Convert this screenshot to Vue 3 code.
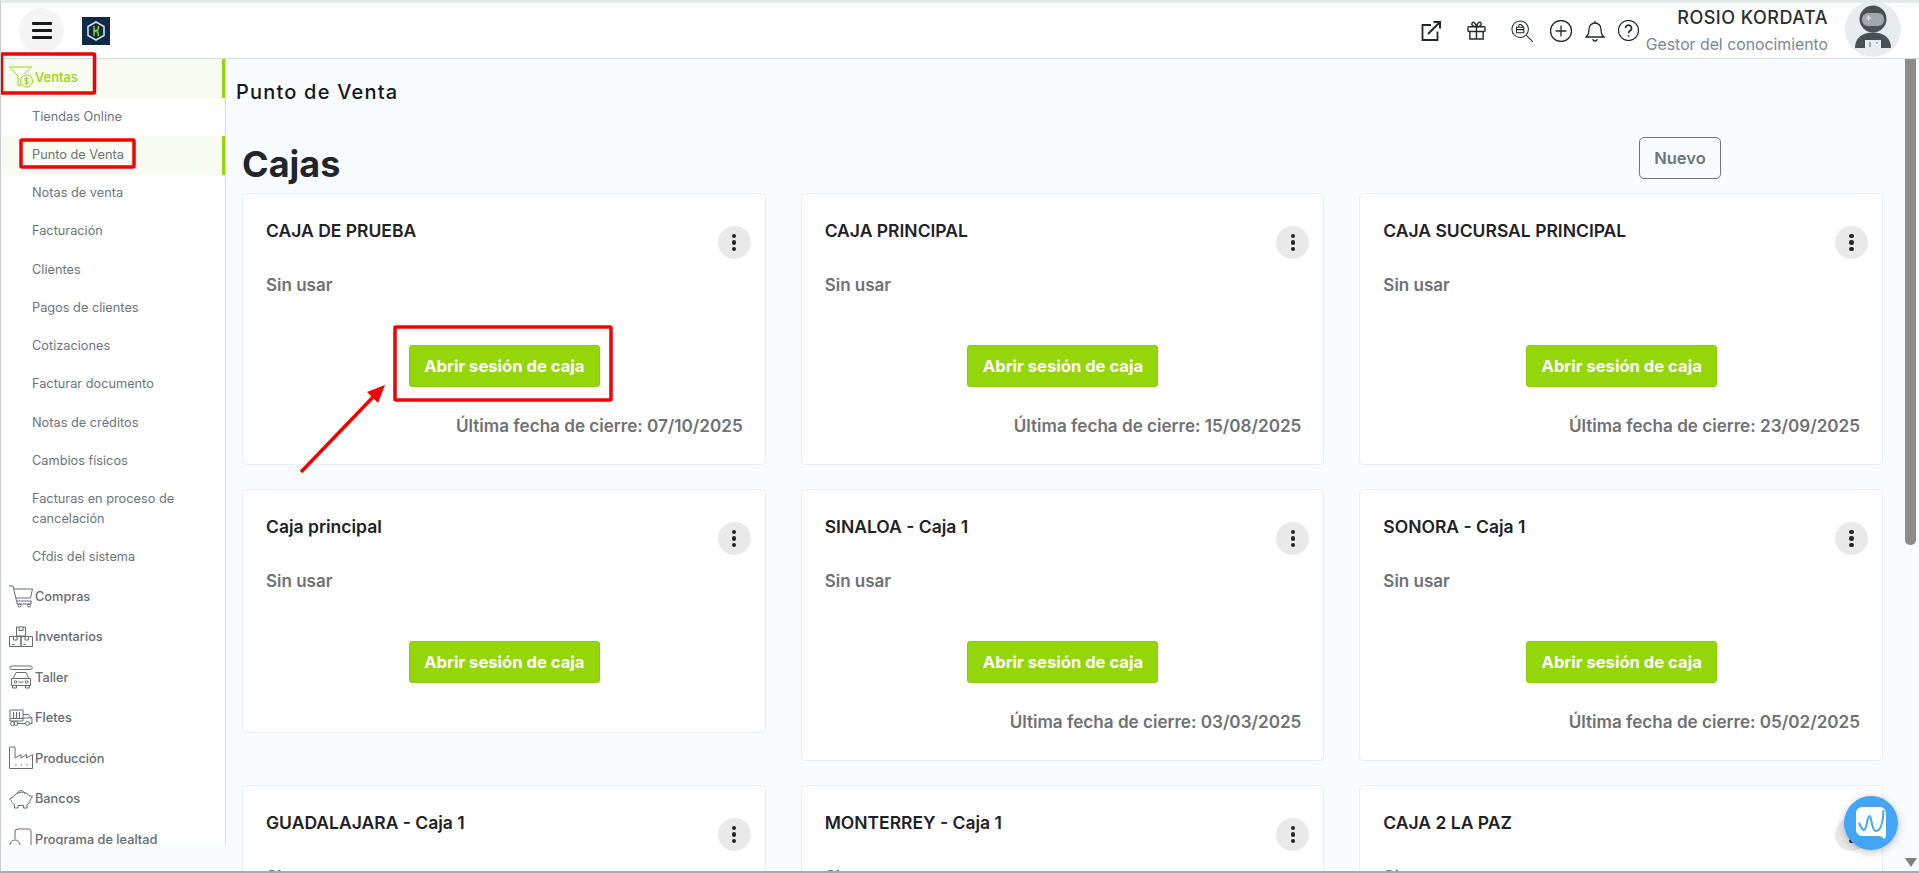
<script setup>
const subItems = [
  { label: 'Tiendas Online' },
  { label: 'Punto de Venta', active: true },
  { label: 'Notas de venta' },
  { label: 'Facturación' },
  { label: 'Clientes' },
  { label: 'Pagos de clientes' },
  { label: 'Cotizaciones' },
  { label: 'Facturar documento' },
  { label: 'Notas de créditos' },
  { label: 'Cambios físicos' },
  { label: 'Facturas en proceso de cancelación' },
  { label: 'Cfdis del sistema' }
]

const modules = [
  {
    label: 'Compras',
    paths: ['M0 2h4l3.500 15h15', 'M5 5h18.500l-2 9', 'M7 14h14.500', 'M8 17v3h14v-3'],
    circles: [[10.500, 21.500, 1.500], [20, 21.500, 1.500]]
  },
  {
    label: 'Inventarios',
    paths: ['M7.500 2h9v9h-9z', 'M0.500 11.500h11.500v10H0.500z', 'M12 11.500h11.500v10H12z', 'M10 2v3.500h4V2', 'M4.500 11.500v3.500h3.500v-3.500', 'M16 11.500v3.500h3.500v-3.500', 'M3 19.500h2.500', 'M14.500 19.500h2.500'],
    circles: []
  },
  {
    label: 'Taller',
    paths: ['M2.500 1h19', 'M2.500 4.500h19', 'M2.500 1a1.750 1.750 0 0 0 0 3.500', 'M21.500 1a1.750 1.750 0 0 1 0 3.500', 'M4.500 13l2.500-5.500h10l2.500 5.500', 'M2.500 13.500h19v7h-19z', 'M3.500 20.500v2.500h4v-2.500', 'M16.500 20.500v2.500h4v-2.500', 'M9.500 17h5'],
    circles: [[6.500, 17, 1.300], [17.500, 17, 1.300]]
  },
  {
    label: 'Fletes',
    paths: ['M1 4h13v11H1z', 'M4.500 6v6', 'M7.500 6v6', 'M10.500 6v6', 'M1 12.500h13', 'M14 8.500h5l4 3.500v5.500h-2', 'M14 12h9', 'M8.500 17.500h8'],
    circles: [[3.500, 17.500, 2], [7, 17.500, 2], [18.500, 17.500, 2]]
  },
  {
    label: 'Producción',
    paths: ['M0.500 1h5.500v11l6-3.500v3.500l5.500-3.500v3.500l6-3.500v14H0.500z', 'M6 19h1.500', 'M11.500 19h1.500', 'M17 19h1.500'],
    circles: []
  },
  {
    label: 'Bancos',
    paths: ['M5 9.500c2-5 12-6 15-1l3.500 1-2.500 3.500v2.500l-3 2v3.500h-3.500v-2.500H9v2.500H5.500v-3.500c-2-1-3-3-3.500-4L0.500 12z', 'M8 7c1-4.500 7-4.500 8 0'],
    circles: []
  },
  {
    label: 'Programa de lealtad',
    paths: ['M6 12V5a3 3 0 0 1 3-3h11a2 2 0 0 1 2 2v18'],
    circles: [[6, 18, 5]]
  }
]

const boxes = [
  { name: 'CAJA DE PRUEBA', closed: '07/10/2025' },
  { name: 'CAJA PRINCIPAL', closed: '15/08/2025' },
  { name: 'CAJA SUCURSAL PRINCIPAL', closed: '23/09/2025' },
  { name: 'Caja principal' },
  { name: 'SINALOA - Caja 1', closed: '03/03/2025' },
  { name: 'SONORA - Caja 1', closed: '05/02/2025' },
  { name: 'GUADALAJARA - Caja 1' },
  { name: 'MONTERREY - Caja 1' },
  { name: 'CAJA 2 LA PAZ' }
]
</script>

<template>
  <div class="page">
    <header class="topbar">
      <button class="burger">
        <span></span><span></span><span></span>
      </button>
      <svg class="logo" viewBox="0 0 28 28">
        <rect width="28" height="28" fill="#0e2a47" />
        <path d="M14 5l8 4.500v9L14 23l-8-4.500v-9z" fill="none" stroke="#d5dbe0" stroke-width="1.600" />
        <path d="M12 9v10M16.500 9l-.5 4-4 1 4 1 .5 4" fill="none" stroke="#8fcf1e" stroke-width="1.500" />
      </svg>

      <div class="tools">
        <svg class="tool external" viewBox="2 2 20 20">
          <path d="M12 6H3.500v15h15v-8.500" />
          <path d="M9 15L21 3M14.500 3H21v6.500" stroke-width="2" />
        </svg>
        <svg class="tool gift" viewBox="2 2 20 20">
          <rect x="3" y="8" width="18" height="5" rx="1" />
          <path d="M5 13v8h14v-8M12 8v13" />
          <path d="M12 8C8 8 6 6 7.500 4S11 4 12 8c1-4 3-6 4.500-4S16 8 12 8z" />
        </svg>
        <svg class="tool search" viewBox="1 1 24 24">
          <circle cx="11" cy="11" r="9" />
          <path d="M7 9h8v6H7zM7 11.500h8M9 9l1-3h2l3 3M17.500 17.500L25 25" />
        </svg>
        <svg class="tool plus" viewBox="1 1 22 22">
          <circle cx="12" cy="12" r="10.500" />
          <path d="M12 6.500v11M6.500 12h11" />
        </svg>
        <svg class="tool bell" viewBox="2 1 20 22">
          <path d="M3 18c2-2 3-3 3-8a6 6 0 0 1 12 0c0 5 1 6 3 8z" />
          <path d="M12 2v2M10 20a2 2 0 0 0 4 0" />
        </svg>
        <svg class="tool help" viewBox="1 1 22 22">
          <circle cx="12" cy="12" r="10.500" />
          <path d="M8.800 9.500a3.200 3.200 0 1 1 4.800 2.800c-1 .6-1.600 1.200-1.600 2.500" stroke-width="1.800" />
          <path d="M12 17v1.500" stroke-width="1.800" />
        </svg>
      </div>

      <div class="user">
        <div class="user-name">ROSIO KORDATA</div>
        <div class="user-role">Gestor del conocimiento</div>
      </div>

      <svg class="avatar" viewBox="0 0 56 56">
        <circle cx="28" cy="28" r="28" fill="#e9ecef" />
        <circle cx="28" cy="18" r="13.500" fill="#4a5056" />
        <rect x="17" y="12" width="22" height="13" rx="6" fill="#a3a7ab" />
        <path d="M21 17h5M23.500 14.500v5" stroke="#e9ebec" stroke-width="1.200" />
        <path d="M10 47c0-10 7-15.500 18-15.500S46 37 46 47z" fill="#4a5056" />
        <rect x="20" y="39" width="16" height="8" fill="#e9ecef" />
        <path d="M25 41v5M32 41v1.500" stroke="#a3a7ab" stroke-width="2" />
      </svg>
    </header>

    <div class="layout">
      <aside class="sidebar">
        <div class="parent active">
          <svg class="parent-icon" viewBox="0 0 24 24">
            <path d="M0.500 2h22l-7 7" />
            <path d="M0.500 2l8.500 9v10l3-1.500" />
            <circle cx="17.500" cy="16" r="6" />
            <path d="M19.500 14c-1-1-4-1-4 .8 0 2 4 1 4 3 0 1.500-3 1.500-4 .5M17.500 12v8" />
          </svg>
          Ventas
        </div>
        <div
          v-for="item in subItems"
          :key="item.label"
          class="sub"
          :class="{ active: item.active }"
        >
          <span>{{ item.label }}</span>
        </div>
        <div v-for="mod in modules" :key="mod.label" class="parent">
          <svg class="parent-icon" viewBox="0 0 24 24">
            <path v-for="d in mod.paths" :key="d" :d="d" />
            <circle
              v-for="c in mod.circles"
              :key="c[0]"
              :cx="c[0]"
              :cy="c[1]"
              :r="c[2]"
            />
          </svg>
          {{ mod.label }}
        </div>
      </aside>

      <main class="content">
        <div class="crumb">Punto de Venta</div>
        <div class="head">
          <h1>Cajas</h1>
          <button class="new">Nuevo</button>
        </div>
        <div class="grid">
          <section
            v-for="box in boxes"
            :key="box.name"
            class="card"
            :class="{ 'no-date': !box.closed }"
          >
            <div class="card-top">
              <div class="card-name">{{ box.name }}</div>
              <div class="dots"><i></i><i></i><i></i></div>
            </div>
            <div class="status">Sin usar</div>
            <button class="open">Abrir sesión de caja</button>
            <div v-if="box.closed" class="closed">Última fecha de cierre: {{ box.closed }}</div>
          </section>
        </div>
      </main>

      <div class="scrollbar">
        <div class="thumb"></div>
        <div class="arrow"></div>
      </div>
    </div>

    <!-- marcas rojas de la captura -->
    <svg class="marks" viewBox="0 0 1919 873">
      <rect x="1.500" y="54" width="93" height="39" rx="1" />
      <rect x="21" y="140" width="113" height="27" rx="1" />
      <rect x="395" y="327" width="216" height="73" rx="1" />
      <path d="M301 472L376 394" />
      <path class="head-mark" d="M385 385L378 403L367 392z" />
    </svg>

    <button class="chat">
      <svg viewBox="0 0 30 32">
        <path d="M6 0h18a6 6 0 0 1 6 6v22l-1 4-5-3H6a6 6 0 0 1-6-6V6a6 6 0 0 1 6-6z" fill="#fff" />
        <path d="M3 16c2 4 3 7 5 7 3 0 3-14 5.500-14S15 24 20 24c5 0 7-8 7.500-21" fill="none" stroke="#42a5f5" stroke-width="2" />
      </svg>
    </button>
  </div>
</template>

<style>
html,
body {
  margin: 0;
  height: 100%;
  overflow: hidden;
  background: #f8fcff;
}
</style>

<style scoped>
.page {
  position: relative;
  display: flex;
  flex-direction: column;
  box-sizing: border-box;
  width: 1919px;
  height: 873px;
  overflow: hidden;
  border-top: 3px solid #e3ebe7;
  border-left: 1px solid #c9cccc;
  border-bottom: 2px solid #a8aaac;
  font-family: Inter, "Noto Sans", sans-serif;
  background: #f8fcff;
}

.topbar {
  flex: none;
  display: flex;
  align-items: center;
  box-sizing: border-box;
  height: 56px;
  padding-left: 18px;
  background: #fff;
  border-bottom: 1px solid #d9dde0;
}

.burger {
  display: flex;
  flex-direction: column;
  justify-content: center;
  align-items: center;
  gap: 4px;
  width: 45px;
  height: 45px;
  padding: 0;
  border: none;
  border-radius: 50%;
  background: #f4f4f4;
}

.burger span {
  width: 20px;
  height: 3px;
  border-radius: 1px;
  background: #16181a;
}

.logo {
  width: 28px;
  height: 28px;
  margin-left: 18px;
}

.tools {
  display: flex;
  align-items: center;
  margin-left: auto;
}

.tool {
  fill: none;
  stroke: #24282c;
  stroke-width: 1.300;
}

.external {
  width: 20px;
  height: 20px;
  margin-right: 26px;
  stroke-width: 1.800;
}

.gift {
  width: 19px;
  height: 19px;
  margin-right: 25px;
  stroke-width: 1.500;
}

.search {
  width: 22px;
  height: 22px;
  margin-right: 17px;
  stroke-width: 1.100;
}

.plus {
  width: 22px;
  height: 22px;
  margin-right: 13px;
}

.bell {
  width: 20px;
  height: 22px;
  margin-right: 13px;
}

.help {
  width: 21px;
  height: 21px;
  margin-right: 7px;
}

.user {
  text-align: right;
}

.user-name {
  font-size: 18px;
  font-weight: 500;
  line-height: 22px;
  color: #2a2e33;
  letter-spacing: 0.5px;
}

.user-role {
  margin-top: 6px;
  font-size: 15.800px;
  line-height: 20px;
  color: #7a8796;
}

.avatar {
  width: 56px;
  height: 56px;
  margin: -4px 18px 0 17px;
}

.layout {
  flex: 1;
  display: flex;
  min-height: 0;
}

.sidebar {
  flex: none;
  box-sizing: border-box;
  width: 225px;
  height: 786px;
  overflow: hidden;
  background: #fff;
  border-right: 1px solid #d5d9dc;
}

.parent {
  display: flex;
  align-items: center;
  gap: 2px;
  box-sizing: border-box;
  height: 40.500px;
  padding: 0 0 2px 8px;
  font-size: 12.750px;
  font-weight: 500;
  color: #656b72;
}

.parent.active {
  height: 39px;
  padding-bottom: 4px;
  font-size: 13px;
  color: #95d60a;
  background: #f7fbf2;
  box-shadow: inset -3px 0 0 #95d60a;
}

.parent-icon {
  flex: none;
  width: 24px;
  height: 24px;
  fill: none;
  stroke: currentColor;
  stroke-width: 1;
}

.sub {
  display: flex;
  align-items: center;
  box-sizing: border-box;
  min-height: 38.250px;
  padding: 8.500px 20px 9.500px 31px;
  font-size: 12.750px;
  line-height: 20px;
  color: #6c747c;
}

.sub.active {
  background: #f7fbf2;
  box-shadow: inset -3px 0 0 #95d60a;
}

.content {
  flex: 1;
  min-width: 0;
  box-sizing: border-box;
  padding: 21px 22px 0 16px;
  overflow: hidden;
}

.crumb {
  margin-left: -6px;
  font-size: 20px;
  font-weight: 500;
  line-height: 24px;
  letter-spacing: 1.200px;
  color: #14171a;
}

.head {
  display: flex;
  justify-content: space-between;
  align-items: flex-start;
  height: 56px;
  margin: 33px 162px 0 0;
}

h1 {
  margin: 0;
  font-size: 36px;
  font-weight: 700;
  line-height: 54px;
  color: #22262c;
}

.new {
  width: 82px;
  height: 42px;
  border: 1px solid #6c757d;
  border-radius: 5px;
  background: transparent;
  font-family: inherit;
  font-size: 16.500px;
  font-weight: 600;
  color: #6c757d;
}

.grid {
  display: grid;
  grid-template-columns: repeat(3, 1fr);
  column-gap: 35px;
  row-gap: 24px;
  align-items: start;
}

.card {
  display: flex;
  flex-direction: column;
  box-sizing: border-box;
  padding: 26px 22px 27px 23px;
  background: #fff;
  border: 1px solid #e6eef8;
  border-radius: 4px;
}

.card.no-date {
  padding-bottom: 49px;
}

.card-top {
  display: flex;
  justify-content: space-between;
  align-items: flex-start;
  height: 39px;
}

.card-name {
  font-size: 17.500px;
  font-weight: 600;
  line-height: 22px;
  color: #1e2227;
}

.dots {
  display: flex;
  flex-direction: column;
  justify-content: center;
  align-items: center;
  gap: 2px;
  width: 33px;
  height: 33px;
  margin: 6px -8px 0 0;
  border-radius: 50%;
  background: #e9e9e9;
}

.dots i {
  width: 4.500px;
  height: 4.500px;
  border-radius: 50%;
  background: #22262c;
}

.status {
  margin-top: 15px;
  font-size: 17px;
  font-weight: 600;
  line-height: 22px;
  color: #6f7174;
}

.open {
  align-self: center;
  width: 191px;
  height: 42px;
  margin-top: 49px;
  padding: 0;
  border: 1px solid #8ccb08;
  border-radius: 3px;
  background: #95d60a;
  font-family: inherit;
  font-size: 16.600px;
  font-weight: 700;
  color: #fff;
}

.closed {
  margin-top: 28px;
  font-size: 17.100px;
  font-weight: 600;
  line-height: 22px;
  text-align: right;
  color: #6f7174;
}

.scrollbar {
  position: relative;
  flex: none;
  width: 14px;
}

.thumb {
  width: 11px;
  height: 486px;
  border-radius: 0 0 5px 5px;
  background: #8c8c8c;
}

.arrow {
  position: absolute;
  left: 0;
  bottom: 4px;
  border-left: 6.500px solid transparent;
  border-right: 6.500px solid transparent;
  border-top: 9px solid #808080;
}

.marks {
  position: absolute;
  left: -1px;
  top: -3px;
  width: 1919px;
  height: 873px;
  pointer-events: none;
  fill: none;
  stroke: #f50000;
  stroke-width: 3.500;
}

.marks .head-mark {
  fill: #f50000;
  stroke: none;
}

.chat {
  position: absolute;
  left: 1843px;
  top: 793px;
  display: flex;
  align-items: center;
  justify-content: center;
  width: 54px;
  height: 54px;
  padding: 0;
  border: none;
  border-radius: 50%;
  background: #42a5f5;
  box-shadow: 0 2px 8px rgba(0, 0, 0, 0.25);
}

.chat svg {
  width: 30px;
  height: 32px;
}
</style>
